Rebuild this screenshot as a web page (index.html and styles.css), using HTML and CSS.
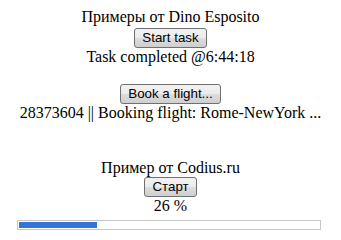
FILE: index.html
```html
<!DOCTYPE html>
<html>
<head>
<meta charset="utf-8">
<link rel="stylesheet" href="styles.css">
</head>
<body>
<div class="demo">
  <div class="line">Примеры от Dino Esposito</div>
  <button class="btn btn-first">Start task</button>
  <div class="line">Task completed @6:44:18</div>
  <div class="line blank"></div>
  <button class="btn">Book a flight...</button>
  <div class="line">28373604 || Booking flight: Rome-NewYork ...</div>
</div>
<div class="demo demo-codius">
  <div class="line">Пример от Codius.ru</div>
  <button class="btn">Старт</button>
  <div class="line">26 %</div>
</div>
<div class="progress">
  <div class="progress-fill" style="width: 26%"></div>
</div>
</body>
</html>
```
FILE: styles.css
```css
html, body {
  background: #ffffff;
}
body {
  margin: 8px;
  font-family: "Liberation Serif", "Times New Roman", serif;
  font-size: 16px;
  color: #000000;
}
.demo {
  display: flex;
  flex-direction: column;
  align-items: center;
}
.line {
  line-height: 18px;
  height: 18px;
  white-space: nowrap;
}
.btn {
  font-family: "Liberation Sans", Arial, sans-serif;
  font-size: 13.33px;
  line-height: 16px;
  height: 20px;
  padding: 1px 7px;
  border: 1px solid #707070;
  border-radius: 3px;
  background: linear-gradient(#f2f2f2 0%, #ebebeb 50%, #dddddd 51%, #cfcfcf 100%);
  color: #000000;
  margin: 0;
}
.btn-first {
  margin-top: 2px;
}
.demo-codius {
  margin-top: 37px;
}
.progress {
  width: 300px;
  height: 6px;
  padding: 1px;
  border: 1px solid #c6c6c6;
  margin: 5px 0 0 9px;
  background: #ffffff;
}
.progress-fill {
  height: 100%;
  background: #3277d3;
}
```
